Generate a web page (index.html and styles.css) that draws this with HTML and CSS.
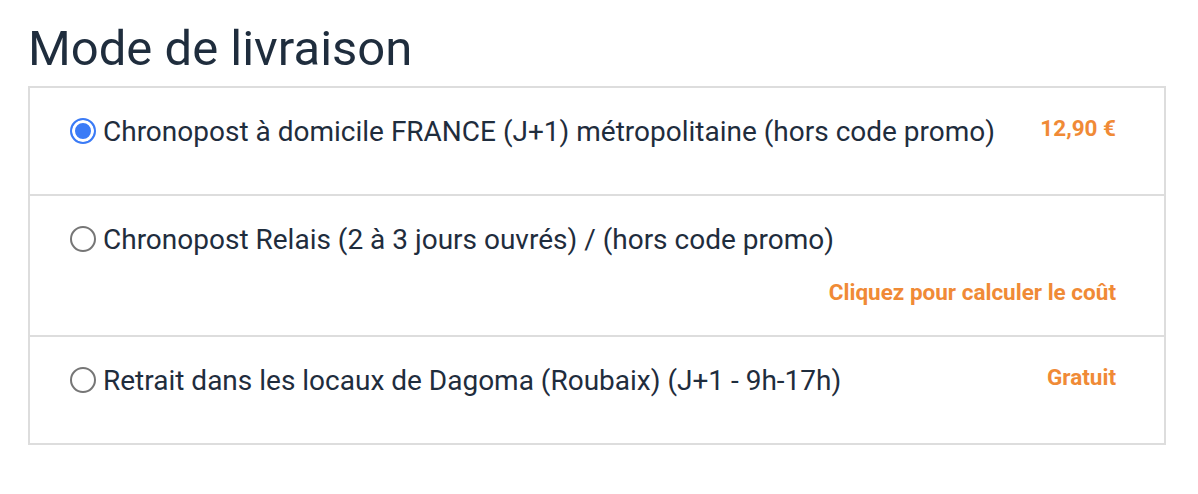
FILE: index.html
```html
<!DOCTYPE html>
<html lang="fr">
  <head>
    <meta charset="UTF-8" />
    <meta name="viewport" content="width=device-width, initial-scale=1.0" />
    <title>Mode de livraison</title>
    <link rel="stylesheet" href="styles.css">
  </head>
  <body>
    <div class="shipping">
      <h1>Mode de livraison</h1>

      <!-- Shipping options -->
      <div class="options">
        <label class="option">
          <span class="option-main">
            <input type="radio" name="shipping" checked />
            <span>Chronopost à domicile FRANCE (J+1) métropolitaine (hors code promo)</span>
          </span>
          <span class="option-price">12,90 €</span>
        </label>

        <label class="option">
          <span class="option-main">
            <input type="radio" name="shipping" />
            <span>Chronopost Relais (2 à 3 jours ouvrés) / (hors code promo)</span>
          </span>
          <span class="option-price">Cliquez pour calculer le coût</span>
        </label>

        <label class="option">
          <span class="option-main">
            <input type="radio" name="shipping" />
            <span>Retrait dans les locaux de Dagoma (Roubaix) (J+1 - 9h-17h)</span>
          </span>
          <span class="option-price">Gratuit</span>
        </label>
      </div>
    </div>
  </body>
</html>
```

FILE: styles.css
```css
/* Page */
body {
  font-family: Roboto, "Liberation Sans", sans-serif;
  background-color: #fff;
  color: #1f2d3d;
  margin: 0;
  padding: 0;
}

.shipping {
  padding: 20px 32px 0 28px;
}

/* Heading */
h1 {
  font-size: 49px;
  font-weight: 400;
  line-height: 1.2;
  margin: 0 0 7px;
}

/* Options box */
.options {
  border: 2px solid #ddd;
}

.option {
  display: flex;
  flex-wrap: wrap;
  align-items: flex-start;
  column-gap: 30px;
  padding: 24px 48px 26px 40px;
  cursor: pointer;
}

.option + .option {
  border-top: 2px solid #ddd;
}

.option-main {
  display: flex;
  align-items: center;
  gap: 7px;
  font-size: 28px;
  line-height: 39px;
  margin-bottom: 17px;
}

/* Radio buttons */
.option input[type="radio"] {
  appearance: none;
  -webkit-appearance: none;
  flex: none;
  width: 26px;
  height: 26px;
  margin: 0;
  border: 2px solid #767676;
  border-radius: 50%;
  background-color: #fff;
}

.option input[type="radio"]:checked {
  border-color: #3b7bf6;
  background-color: #3b7bf6;
  box-shadow: inset 0 0 0 3px #fff;
}

/* Price */
.option-price {
  margin-left: auto;
  color: #f08a36;
  font-size: 22.5px;
  font-weight: 700;
  line-height: 33px;
}
```
